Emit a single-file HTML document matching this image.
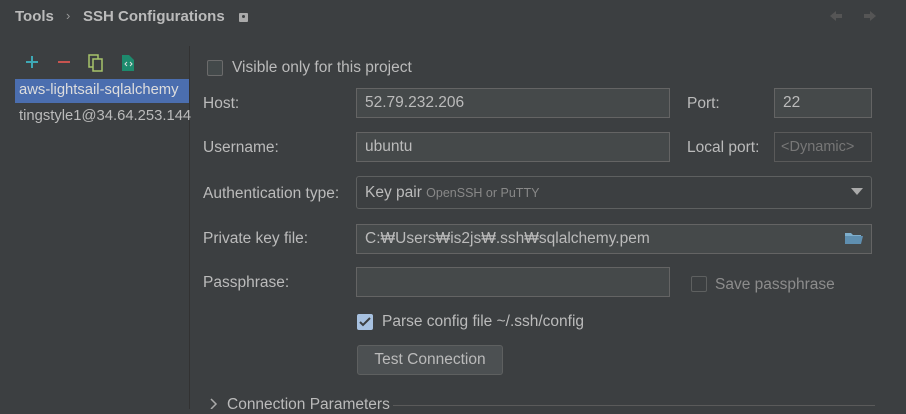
<!DOCTYPE html>
<html><head><meta charset="utf-8"><style>
*{margin:0;padding:0;box-sizing:border-box}
body{width:906px;height:409px;background:#3c3f41;font-family:"Liberation Sans","Noto Sans CJK KR",sans-serif;font-size:15.5px;color:#bbbbbb;position:relative;overflow:hidden}
.a{position:absolute;white-space:nowrap}
.f{position:absolute;background:#45494a;border:1px solid #646464;height:30px;padding:0 8px;line-height:28px;color:#bbbbbb}
.cb{position:absolute;width:16px;height:16px;border:1px solid #6b6b6b;border-radius:2px;background:#43494a}
</style></head><body>
<div class="a" style="left:15px;top:8px;font-weight:bold;font-size:15px">Tools</div>
<div class="a" style="left:66px;top:8px;font-size:13px;color:#999">›</div>
<div class="a" style="left:83px;top:8px;font-weight:bold;font-size:15px">SSH Configurations</div>
<div class="a" style="left:239px;top:13px;width:9px;height:9px;background:#aaa;border-radius:1px"><div style="position:absolute;left:3px;top:2px;width:3px;height:3px;background:#3c3f41;border-radius:50%"></div></div>
<svg class="a" style="left:828px;top:9px" width="50" height="14"><path d="M2 7 L8 2 V5 H14 V9 H8 V12 Z" fill="#555"/><path d="M48 7 L42 2 V5 H36 V9 H42 V12 Z" fill="#555"/></svg>
<div class="a" style="left:189px;top:46px;width:1px;height:363px;background:#323232"></div>
<svg class="a" style="left:24px;top:53px" width="120" height="20">
<path d="M8 3v12M2 9h12" stroke="#3ea8b5" stroke-width="2"/>
<path d="M34 9h12" stroke="#c75450" stroke-width="2"/>
<rect x="65" y="2" width="9" height="12" fill="none" stroke="#a7c46a" stroke-width="1.5"/>
<rect x="69" y="6" width="9" height="12" fill="#3c3f41" stroke="#a7c46a" stroke-width="1.5"/>
<path d="M98 2h7l5 5v11h-12z" fill="#1d8a6d"/><path d="M103 9l-2 2 2 2M106 9l2 2-2 2" stroke="#ddd" fill="none"/>
</svg>
<div class="a" style="left:15px;top:79px;width:174px;height:24px;background:#4b6eaf"></div>
<div class="a" style="left:19px;top:82px;color:#dddddd;font-size:14.8px">aws-lightsail-sqlalchemy</div>
<div class="a" style="left:19px;top:108px;font-size:14.8px">tingstyle1@34.64.253.144</div>

<div class="cb" style="left:207px;top:60px"></div>
<div class="a" style="left:232px;top:59px">Visible only for this project</div>

<div class="a" style="left:203px;top:95px">Host:</div>
<div class="f" style="left:356px;top:88px;width:314px">52.79.232.206</div>
<div class="a" style="left:687px;top:95px">Port:</div>
<div class="f" style="left:774px;top:88px;width:98px">22</div>

<div class="a" style="left:203px;top:139px">Username:</div>
<div class="f" style="left:356px;top:132px;width:314px">ubuntu</div>
<div class="a" style="left:687px;top:139px">Local port:</div>
<div class="f" style="left:774px;top:132px;width:98px;background:#3c3f41;color:#777;padding:0 6px;border-color:#5a5a5a;font-size:14.5px">&lt;Dynamic&gt;</div>

<div class="a" style="left:203px;top:185px">Authentication type:</div>
<div class="f" style="left:356px;top:176px;width:516px;height:33px;line-height:31px;background:#3c3f41;border-color:#5e6060;border-radius:3px">Key pair <span style="font-size:12.5px;color:#888">OpenSSH or PuTTY</span></div>
<svg class="a" style="left:851px;top:188px" width="12" height="8"><path d="M0 0h12L6 7z" fill="#aaa"/></svg>

<div class="a" style="left:203px;top:230px">Private key file:</div>
<div class="f" style="left:356px;top:224px;width:516px">C:₩Users₩is2js₩.ssh₩sqlalchemy.pem</div>
<svg class="a" style="left:845px;top:231px" width="18" height="14"><path d="M0 2h6l2 2h8v3H0z" fill="#7eaecc"/><path d="M0 5h18l-2 8H0z" fill="#5f8fb0"/></svg>

<div class="a" style="left:203px;top:274px">Passphrase:</div>
<div class="f" style="left:356px;top:267px;width:314px"></div>
<div class="cb" style="left:691px;top:276px;background:#3c3f41;border-color:#5e6060"></div>
<div class="a" style="left:715px;top:276px;color:#8c8c8c">Save passphrase</div>

<div class="cb" style="left:357px;top:314px;background:#a7c1e0;border-color:#a7c1e0"></div>
<svg class="a" style="left:359px;top:316px" width="12" height="12"><path d="M1 6l3 3 7-7" stroke="#3c3f41" stroke-width="2" fill="none"/></svg>
<div class="a" style="left:382px;top:313px">Parse config file ~/.ssh/config</div>

<div class="a" style="left:357px;top:345px;width:146px;height:30px;background:#4c5052;border:1px solid #5e6060;border-radius:3px;text-align:center;line-height:28px">Test Connection</div>

<svg class="a" style="left:210px;top:398px" width="8" height="11"><path d="M1 1l5 5-5 5" stroke="#aaa" stroke-width="1.5" fill="none"/></svg>
<div class="a" style="left:227px;top:396px">Connection Parameters</div>
<div class="a" style="left:393px;top:405px;width:482px;height:1px;background:#5a5a5a"></div>
</body></html>
